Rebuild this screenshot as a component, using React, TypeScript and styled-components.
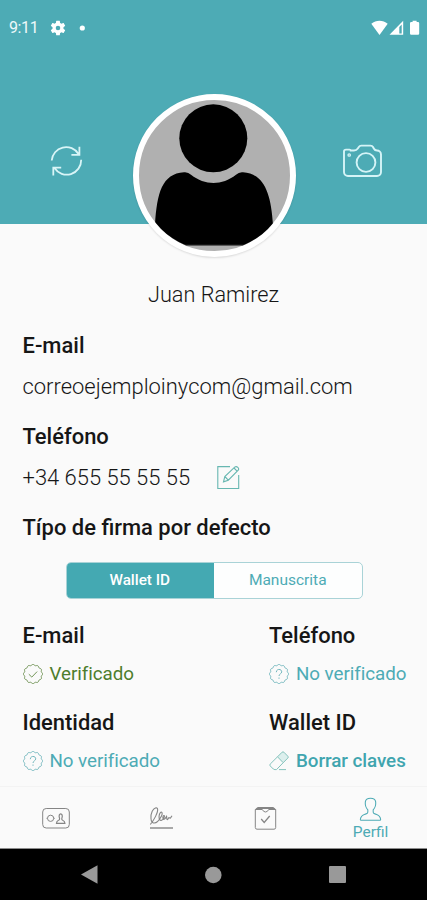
import React from 'react';
import styled, { createGlobalStyle } from 'styled-components';

const TEAL = '#4dabb5';

const GlobalStyle = createGlobalStyle`
  * { box-sizing: border-box; }
  body {
    margin: 0;
    background: #fafafa;
    font-family: Roboto, 'Noto Sans', sans-serif;
    color: #161616;
  }
  svg { display: block; flex: none; }
`;

const Screen = styled.div`
  width: 427px;
  height: 900px;
  display: flex;
  flex-direction: column;
  overflow: hidden;
  background: #fafafa;
`;

const Header = styled.header`
  height: 224px;
  flex: none;
  background: ${TEAL};
`;

const StatusBar = styled.div`
  height: 55px;
  padding: 0 7px 0 9px;
  display: flex;
  justify-content: space-between;
  align-items: center;
  color: #fff;
`;

const StatusGroup = styled.div`
  display: flex;
  align-items: center;
`;

const Clock = styled.span`
  width: 41px;
  padding-top: 1px;
  font-size: 16px;
  line-height: 20px;
  letter-spacing: -0.4px;
  color: #eef9fa;
`;

const HeaderActions = styled.div`
  height: 202px;
  padding: 38.5px 44px 0 50px;
  display: grid;
  grid-template-columns: 82.5px 163px 1fr;
  justify-items: start;
`;

const IconButton = styled.button<{ $end?: boolean }>`
  border: 0;
  padding: 0;
  margin-top: 50.5px;
  height: 36px;
  background: none;
  justify-self: ${(p) => (p.$end ? 'end' : 'start')};
`;

const Avatar = styled.div`
  width: 163px;
  height: 163px;
  border-radius: 50%;
  border: 6px solid #fff;
  background: #b0b0b0;
  overflow: hidden;
  box-shadow: 0 1px 2px rgba(0, 0, 0, 0.12);
`;

const Name = styled.h1`
  margin: 51px 0 10.5px;
  height: 40px;
  line-height: 40px;
  text-align: center;
  font-size: 21.7px;
  font-weight: 300;
`;

const Content = styled.main`
  height: 562px;
  flex: none;
  overflow: hidden;
`;

const Field = styled.section`
  padding-left: 22.5px;
  margin-bottom: 10px;
`;

const Title = styled.h2<{ $height?: number }>`
  margin: 0;
  height: ${(p) => p.$height ?? 40}px;
  line-height: ${(p) => p.$height ?? 40}px;
  font-size: 21.95px;
  font-weight: 500;
  white-space: nowrap;
`;

const Value = styled.div`
  height: 41px;
  display: flex;
  align-items: center;
  gap: 27px;
  font-size: 21.95px;
  font-weight: 300;
  white-space: nowrap;
`;

const Segments = styled.div`
  width: 297px;
  height: 37px;
  margin: 14px 0 18px 65.5px;
  display: grid;
  grid-template-columns: 1fr 1fr;
  border: 1px solid #a9d3d7;
  border-radius: 5px;
  overflow: hidden;
  background: #fdfefe;
`;

const Segment = styled.button<{ $active?: boolean }>`
  border: 0;
  padding: 0;
  margin: ${(p) => (p.$active ? '-1px 0 -1px -1px' : '0')};
  background: ${(p) => (p.$active ? '#44a9b2' : 'transparent')};
  color: ${(p) => (p.$active ? '#fff' : TEAL)};
  font: ${(p) => (p.$active ? '500 15.3px' : '400 15.5px')} Roboto, sans-serif;
`;

const StatusGrid = styled.div`
  padding-left: 22.5px;
  display: grid;
  grid-template-columns: 246.5px 1fr;
  row-gap: 11px;
`;

const StatusValue = styled.div<{ $color: string; $weight?: number }>`
  height: 38px;
  display: flex;
  align-items: center;
  gap: 7px;
  color: ${(p) => p.$color};
  font-size: 18.8px;
  font-weight: ${(p) => p.$weight ?? 400};
  letter-spacing: -0.05px;
  white-space: nowrap;
`;

const TabBar = styled.nav`
  height: 63px;
  flex: none;
  padding: 0 4px;
  display: grid;
  grid-template-columns: repeat(4, 1fr);
  border-top: 1px solid #f3f3f3;
  border-bottom: 1px solid #8c8c8c;
`;

const Tab = styled.div<{ $active?: boolean }>`
  display: flex;
  flex-direction: column;
  align-items: center;
  padding-top: ${(p) => (p.$active ? 10 : 17)}px;
  color: ${(p) => (p.$active ? TEAL : '#858585')};
  font-size: 15.5px;
  line-height: 20px;
`;

const SystemBar = styled.footer`
  height: 51px;
  flex: none;
  padding: 0 28px;
  background: #000;
  display: grid;
  grid-template-columns: repeat(3, 1fr);
  align-items: center;
  justify-items: center;
`;

const GearIcon = () => (
  <svg width="16" height="16" viewBox="1.5 1.5 21 21" fill="#fff">
    <path d="M19.14 12.94c.04-.3.06-.61.06-.94 0-.32-.02-.64-.07-.94l2.03-1.58a.5.5 0 0 0 .12-.61l-1.92-3.32a.49.49 0 0 0-.59-.22l-2.39.96c-.5-.38-1.03-.7-1.62-.94l-.36-2.54a.48.48 0 0 0-.48-.41h-3.84a.47.47 0 0 0-.47.41l-.36 2.54c-.59.24-1.13.57-1.62.94l-2.39-.96a.48.48 0 0 0-.59.22L2.74 8.87a.47.47 0 0 0 .12.61l2.03 1.58c-.05.3-.09.63-.09.94s.02.64.07.94l-2.03 1.58a.5.5 0 0 0-.12.61l1.92 3.32c.12.22.37.29.59.22l2.39-.96c.5.38 1.03.7 1.62.94l.36 2.54c.05.24.24.41.48.41h3.84c.24 0 .44-.17.47-.41l.36-2.54c.59-.24 1.13-.56 1.62-.94l2.39.96c.22.08.47 0 .59-.22l1.92-3.32a.47.47 0 0 0-.12-.61zM12 15a3 3 0 1 1 0-6 3 3 0 0 1 0 6z" />
  </svg>
);

const DotIcon = () => (
  <svg width="20" height="6" viewBox="0 0 20 6">
    <circle cx="16.300" cy="3" r="2.600" fill="#fff" />
  </svg>
);

const SignalIcons = () => (
  <svg width="49" height="16" viewBox="0 0 49 16" fill="#fff">
    <path d="M.3 3.7C5-.4 12-.4 16.700 3.700L8.500 15z" />
    <path d="M18.500 14.700 32.200.8v13.900z" />
    <path d="M28.300 7v6.500h2.400V4.500z" fill={TEAL} />
    <path d="M39 3.200q0-1.200 1.200-1.200h1.400V.7h4V2H47q1.200 0 1.200 1.200v10.300q0 1.200-1.200 1.200h-6.800q-1.200 0-1.200-1.200z" />
  </svg>
);

const SyncIcon = () => (
  <svg width="34" height="36" viewBox="0 0 34 36" fill="none" stroke="#d9f5f7" strokeWidth="1.8">
    <path d="M1.700 16.500A14.500 14.500 0 0 1 28.500 10M29.400 2.800v8h-8" />
    <path d="M31.200 15.800A14.500 14.500 0 0 1 4.500 24M3.300 31.600v-8h7.900" />
  </svg>
);

const CameraIcon = () => (
  <svg width="42" height="36" viewBox="0 0 42 36" fill="none" stroke="#d5f4f7" strokeWidth="1.900">
    <path d="M3 8.500V7.500Q3 5.600 5 5.600H8.500Q9.700 5.600 9.700 6.500H13Q15.500 6.500 16.800 4.500L17.800 3Q18.600 1.600 20.300 1.600H29.500Q31.200 1.600 32 3L32.800 4.500Q33.800 6.500 36 6.500A4 4 0 0 1 40 10.500V28A4 4 0 0 1 36 32H7A4 4 0 0 1 3 28z" />
    <circle cx="25" cy="18.500" r="9.400" />
    <circle cx="8.200" cy="11" r="1.200" strokeWidth="1.300" />
  </svg>
);

const AvatarFigure = () => (
  <svg width="151" height="151" viewBox="139 100.2 151 151">
    <path d="M155 246V225C157 193 162 174 184 172.500Q188 172 191 175C205 186 222 186 236 175Q239 172 243 172.500C264 174 271 193 273 225V246z" />
    <path d="M155 245.500h118" stroke="#777" strokeWidth=".8" />
    <circle cx="213.300" cy="138.500" r="34" />
  </svg>
);

const EditIcon = () => (
  <svg width="23" height="25" viewBox="0 0 23 25" fill="none" stroke="#67b7b1" strokeWidth="1.100">
    <path d="M13 1.600H.8V23.500H21.700V10" />
    <path d="M6.500 16.800 7.800 11.500 17.700 2.200Q19.200.9 20.800 2.300T21 5.500L11.300 15.200zM7.800 11.500l3.500 3.700M17 3l3.300 3.300" />
  </svg>
);

const scallop = (() => {
  const points: string[] = [];
  for (let i = 0; i <= 96; i += 1) {
    const a = (i / 96) * Math.PI * 2;
    const r = 9.1 + 0.5 * Math.cos(a * 12);
    points.push(`${(10 + r * Math.cos(a)).toFixed(2)} ${(10 + r * Math.sin(a)).toFixed(2)}`);
  }
  return `M${points.join('L')}z`;
})();

const SealIcon = ({ verified }: { verified?: boolean }) => (
  <svg width="20" height="20" viewBox="0 0 20 20" fill="none" stroke={verified ? '#729557' : '#75b9bf'} strokeWidth="1">
    <path d={scallop} />
    {verified ? (
      <path d="m5.800 10.200 3 2.900 5.300-5.500" />
    ) : (
      <path d="M7.300 8.200c0-3.800 5.600-3.500 5.400-.3-.1 2-2.700 2-2.700 4.100M10 13.500v1.300" />
    )}
  </svg>
);

const EraserIcon = () => (
  <svg width="20" height="20" viewBox="0 0 20 20" fill="none" stroke="#85c3bd" strokeWidth="1">
    <path d="M8.500 5.800 13.100 1.200Q14 .4 14.900 1.200L18.900 5.300Q19.700 6.200 18.900 7L14.200 11.700z" fill="#dcefed" />
    <path d="M8.500 5.800 1.200 13.100Q.4 14 1.200 14.900L4.300 18Q5 18.600 6 18.600H7.500L14.200 11.700M10 18.600h7" />
  </svg>
);

const CardIcon = () => (
  <svg width="28" height="29" viewBox="0 0 28 29" fill="none" stroke="currentColor" strokeWidth="1">
    <rect x=".7" y="4.500" width="26.600" height="19.500" rx="3.500" />
    <circle cx="8.600" cy="14.300" r="3.100" />
    <path d="M17.600 14.500c-2.300-6.300 4.500-6.300 2.200 0-.3 1.300.2 1.700 1.200 2 1.200.4 1.800 1.200 1.900 2.800h-8.400c.1-1.600.6-2.400 1.700-2.800 1-.3 1.700-.7 1.400-2z" strokeWidth="1.200" />
    <path d="M4.500 14.300h1M11.700 14.300h1" />
  </svg>
);

const SignatureIcon = () => (
  <svg width="25" height="29" viewBox="0 0 25 29" fill="none" stroke="currentColor" strokeWidth="1.100">
    <path d="M1.300 20.500C5 16 9.200 8.500 8.600 5 8.200 2.700 5 4 3.200 7.300 1.200 11.500 1.500 18.500 4.500 19c3.200.5 6-3.200 8-7 1.200-2.300.7-4.500-.7-3.700-1.600 1-2.100 4.500-1.500 6.700.7 2.200 2.800 1.600 4.200-.5.900-1.400 1.300-2.800.6-3-.9-.2-1.500 1.600-1.100 3 .4 1.500 1.700.8 2.600-.6l1-1.500c.3 1.400 0 3.300.6 3.300.8 0 1.100-2.100 1.900-2.100.6 0 .7 1.100 1.300.5l1.600-2.300" />
    <path d="M1 24h23" strokeWidth="1.400" />
  </svg>
);

const TaskIcon = () => (
  <svg width="23" height="29" viewBox="0 0 23 29" fill="none" stroke="currentColor" strokeWidth="1">
    <path d="M1.300 5.500v18q0 1.700 1.700 1.700h17q1.700 0 1.700-1.700v-18L19.500 3.500h-16z" />
    <path d="M1.300 5.500h7Q9.500 8 11.500 8t3.200-2.500h7M2.800 4.500h17.400" />
    <path d="m7.200 15 3 3.500 5.500-6.500" strokeWidth="1.300" />
  </svg>
);

const PersonIcon = () => (
  <svg width="23" height="25" viewBox="0 0 24 26" fill="none" stroke="currentColor" strokeWidth="1.100">
    <path d="M9.200 13.300C7 11 6.300 7.700 6.600 5 7 2.300 9 1.300 12 1.300s5 1 5.400 3.700c.3 2.700-.4 6-2.600 8.300v2.500c.1 1.400 1.200 1.600 3 2.200 3.200 1 4.500 2.300 4.800 5.500q0 .8-.8.800H2.200q-.8 0-.8-.8c.3-3.200 1.600-4.500 4.800-5.500 1.800-.6 2.900-.8 3-2.200z" />
  </svg>
);

export default function App() {
  return (
    <>
      <GlobalStyle />
      <Screen>
        <Header>
          <StatusBar>
            <StatusGroup>
              <Clock>9:11</Clock>
              <GearIcon />
              <DotIcon />
            </StatusGroup>
            <SignalIcons />
          </StatusBar>
          <HeaderActions>
            <IconButton aria-label="Actualizar"><SyncIcon /></IconButton>
            <Avatar><AvatarFigure /></Avatar>
            <IconButton $end aria-label="Cambiar foto"><CameraIcon /></IconButton>
          </HeaderActions>
        </Header>
        <Content>
          <Name>Juan Ramirez</Name>
          <Field>
            <Title>E-mail</Title>
            <Value>correoejemploinycom@gmail.com</Value>
          </Field>
          <Field>
            <Title>Teléfono</Title>
            <Value>+34 655 55 55 55<EditIcon /></Value>
          </Field>
          <Field>
            <Title>Típo de firma por defecto</Title>
          </Field>
          <Segments>
            <Segment $active>Wallet ID</Segment>
            <Segment>Manuscrita</Segment>
          </Segments>
          <StatusGrid>
            <div>
              <Title $height={38}>E-mail</Title>
              <StatusValue $color="#4d7d2d"><SealIcon verified />Verificado</StatusValue>
            </div>
            <div>
              <Title $height={38}>Teléfono</Title>
              <StatusValue $color={TEAL}><SealIcon />No verificado</StatusValue>
            </div>
            <div>
              <Title $height={38}>Identidad</Title>
              <StatusValue $color={TEAL}><SealIcon />No verificado</StatusValue>
            </div>
            <div>
              <Title $height={38}>Wallet ID</Title>
              <StatusValue $color="#40a5af" $weight={500}><EraserIcon />Borrar claves</StatusValue>
            </div>
          </StatusGrid>
        </Content>
        <TabBar>
          <Tab><CardIcon /></Tab>
          <Tab><SignatureIcon /></Tab>
          <Tab><TaskIcon /></Tab>
          <Tab $active><PersonIcon />Perfil</Tab>
        </TabBar>
        <SystemBar>
          <svg width="17" height="19" viewBox="0 0 17 19" fill="#999"><path d="M0 9.500 16.500.3v18.400z" /></svg>
          <svg width="18" height="18" viewBox="0 0 18 18" fill="#999"><circle cx="9.300" cy="9" r="8.300" /></svg>
          <svg width="17" height="17" viewBox="0 0 17 17" fill="#999"><rect width="17" height="17" rx="1" /></svg>
        </SystemBar>
      </Screen>
    </>
  );
}
